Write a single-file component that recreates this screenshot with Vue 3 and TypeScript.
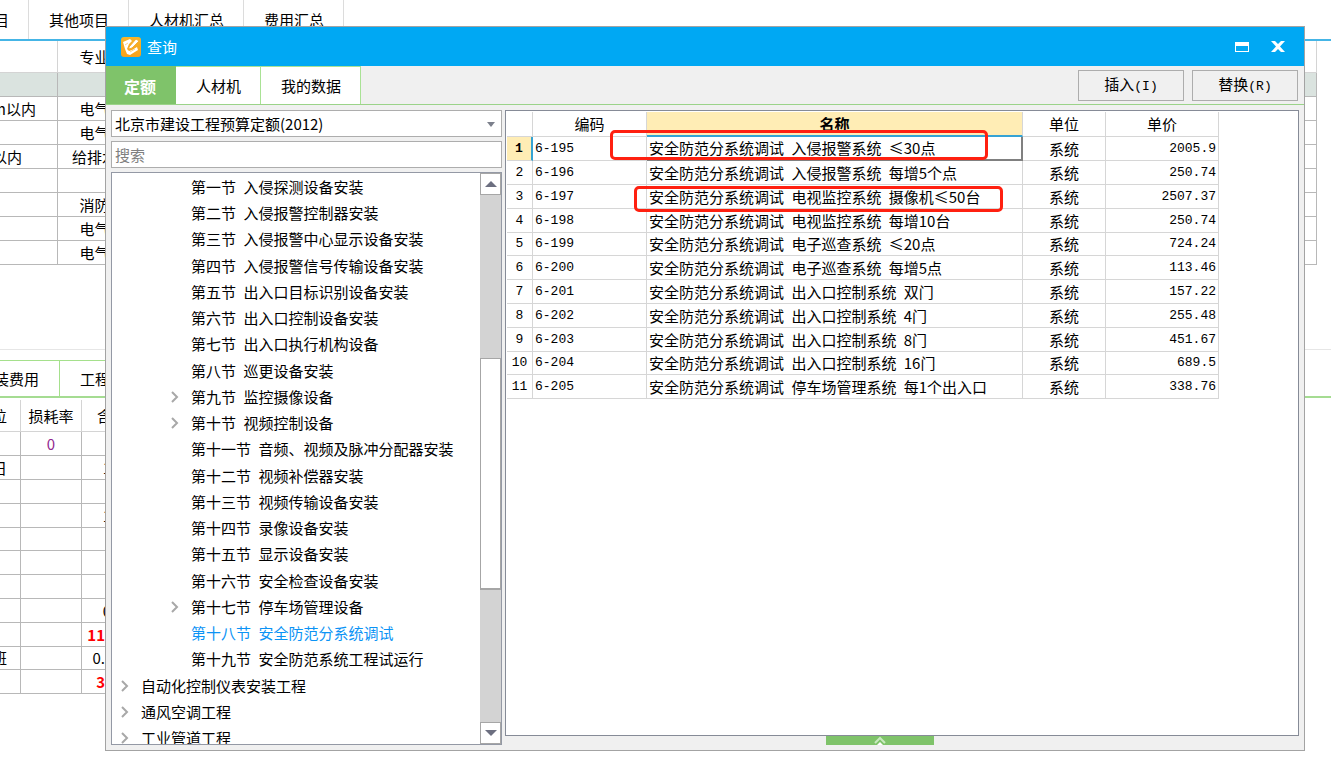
<script setup lang="ts">
import { ref } from 'vue'

interface TreeNode {
  level: 'root' | 'section'
  words: string[]
  expandable?: boolean
}

interface QuotaRow {
  code: string
  name: string[]
  unit: string
  price: string
}

const sheetTabs: string[] = ['目', '其他项目', '人材机汇总', '费用汇总']
const activeTab = ref('定额')
const dialogTabs: string[] = ['定额', '人材机', '我的数据']
const library = ref('北京市建设工程预算定额(2012)')
const keyword = ref('')
const selectedNode = ref('第十八节')

const upperRows: string[][] = [
  ['', ''],
  ['m以内', '电气'],
  ['', '电气'],
  ['以内', '给排水'],
  ['', ''],
  ['', '消防'],
  ['', '电气'],
  ['', '电气'],
]

const lowerRows: { unit: string; loss: string; amount: string; kind: string }[] = [
  { unit: '', loss: '0', amount: '', kind: '' },
  { unit: '日', loss: '', amount: '1', kind: 'far' },
  { unit: '', loss: '', amount: '', kind: '' },
  { unit: '', loss: '', amount: '1', kind: 'far' },
  { unit: '', loss: '', amount: '', kind: '' },
  { unit: '', loss: '', amount: '', kind: '' },
  { unit: '', loss: '', amount: '', kind: '' },
  { unit: '', loss: '', amount: '0', kind: 'far' },
  { unit: '', loss: '', amount: '11', kind: 'alert' },
  { unit: '班', loss: '', amount: '0.', kind: '' },
  { unit: '', loss: '', amount: '3', kind: 'alert' },
]

const nodes: TreeNode[] = [
  { level: 'section', words: ['第一节', '入侵探测设备安装'] },
  { level: 'section', words: ['第二节', '入侵报警控制器安装'] },
  { level: 'section', words: ['第三节', '入侵报警中心显示设备安装'] },
  { level: 'section', words: ['第四节', '入侵报警信号传输设备安装'] },
  { level: 'section', words: ['第五节', '出入口目标识别设备安装'] },
  { level: 'section', words: ['第六节', '出入口控制设备安装'] },
  { level: 'section', words: ['第七节', '出入口执行机构设备'] },
  { level: 'section', words: ['第八节', '巡更设备安装'] },
  { level: 'section', words: ['第九节', '监控摄像设备'], expandable: true },
  { level: 'section', words: ['第十节', '视频控制设备'], expandable: true },
  { level: 'section', words: ['第十一节', '音频、视频及脉冲分配器安装'] },
  { level: 'section', words: ['第十二节', '视频补偿器安装'] },
  { level: 'section', words: ['第十三节', '视频传输设备安装'] },
  { level: 'section', words: ['第十四节', '录像设备安装'] },
  { level: 'section', words: ['第十五节', '显示设备安装'] },
  { level: 'section', words: ['第十六节', '安全检查设备安装'] },
  { level: 'section', words: ['第十七节', '停车场管理设备'], expandable: true },
  { level: 'section', words: ['第十八节', '安全防范分系统调试'] },
  { level: 'section', words: ['第十九节', '安全防范系统工程试运行'] },
  { level: 'root', words: ['自动化控制仪表安装工程'], expandable: true },
  { level: 'root', words: ['通风空调工程'], expandable: true },
  { level: 'root', words: ['工业管道工程'], expandable: true },
]

const group = '安全防范分系统调试'
const rows: QuotaRow[] = [
  { code: '6-195', name: [group, '入侵报警系统', '≤30点'], unit: '系统', price: '2005.9' },
  { code: '6-196', name: [group, '入侵报警系统', '每增5个点'], unit: '系统', price: '250.74' },
  { code: '6-197', name: [group, '电视监控系统', '摄像机≤50台'], unit: '系统', price: '2507.37' },
  { code: '6-198', name: [group, '电视监控系统', '每增10台'], unit: '系统', price: '250.74' },
  { code: '6-199', name: [group, '电子巡查系统', '≤20点'], unit: '系统', price: '724.24' },
  { code: '6-200', name: [group, '电子巡查系统', '每增5点'], unit: '系统', price: '113.46' },
  { code: '6-201', name: [group, '出入口控制系统', '双门'], unit: '系统', price: '157.22' },
  { code: '6-202', name: [group, '出入口控制系统', '4门'], unit: '系统', price: '255.48' },
  { code: '6-203', name: [group, '出入口控制系统', '8门'], unit: '系统', price: '451.67' },
  { code: '6-204', name: [group, '出入口控制系统', '16门'], unit: '系统', price: '689.5' },
  { code: '6-205', name: [group, '停车场管理系统', '每1个出入口'], unit: '系统', price: '338.76' },
]
</script>

<template>
  <div class="page">
    <div class="workspace">
      <nav class="sheet-tabs">
        <button v-for="tab in sheetTabs" :key="tab" type="button" class="sheet-tab">{{ tab }}</button>
      </nav>

      <table class="back-table upper">
        <colgroup><col class="u-desc" /><col class="u-major" /><col /></colgroup>
        <thead>
          <tr><th></th><th>专业</th><th></th></tr>
        </thead>
        <tbody>
          <tr v-for="(row, i) in upperRows" :key="i" :class="{ current: i === 0 }">
            <td>{{ row[0] }}</td>
            <td class="center">{{ row[1] }}</td>
            <td></td>
          </tr>
        </tbody>
      </table>

      <div class="pane-edge"></div>
      <nav class="detail-tabs">
        <button type="button" class="detail-tab">装费用</button>
        <button type="button" class="detail-tab">工程</button>
      </nav>

      <table class="back-table lower">
        <colgroup><col class="l-unit" /><col class="l-loss" /><col class="l-amount" /></colgroup>
        <thead>
          <tr><th class="unit">位</th><th>损耗率</th><th>含量</th></tr>
        </thead>
        <tbody>
          <tr v-for="(row, i) in lowerRows" :key="i">
            <td class="unit">{{ row.unit }}</td>
            <td class="loss">{{ row.loss }}</td>
            <td class="amount" :class="row.kind">{{ row.amount }}</td>
          </tr>
        </tbody>
      </table>
    </div>

    <section class="dialog" role="dialog" aria-labelledby="dialog-title">
      <header class="title-bar">
        <svg class="app-icon" viewBox="0 0 20 20" aria-hidden="true">
          <defs>
            <linearGradient id="amber" x1="0" y1="0" x2="0" y2="1">
              <stop offset="0" stop-color="#f6b52b" />
              <stop offset="1" stop-color="#f7a11a" />
            </linearGradient>
          </defs>
          <rect width="20" height="20" rx="3" fill="url(#amber)" />
          <path d="M2 5L9 2L11 4L8 7L6 12L8 14L11 13L16 10L17 13L9 18L6 17L4 12Z" fill="#fff" />
          <path d="M8 10L15 2L18 4L11 11L8 12Z" fill="#fff" stroke="#f5ad35" stroke-width="1" />
          <path d="M4 8L7 6M9 15L14 12" stroke="#f9d48c" stroke-width="1" />
        </svg>
        <h1 id="dialog-title">查询</h1>
        <button type="button" class="window-btn" aria-label="最大化">
          <svg width="14" height="10" viewBox="0 0 14 10"><path d="M0 0H14V10H0ZM1 4V9H13V4Z" fill="#fff" fill-rule="evenodd" /></svg>
        </button>
        <button type="button" class="window-btn" aria-label="关闭">
          <svg width="14" height="11" viewBox="0 0 14 11"><path d="M0 0H4L7 3L10 0H14L9 5.5L14 11H10L7 8L4 11H0L5 5.5Z" fill="#fff" /></svg>
        </button>
      </header>

      <div class="tool-bar">
        <button
          v-for="tab in dialogTabs"
          :key="tab"
          type="button"
          class="tab"
          :class="{ active: tab === activeTab }"
          @click="activeTab = tab"
        >{{ tab }}</button>
        <div class="actions">
          <button type="button" class="action">插入<span class="latin">(I)</span></button>
          <button type="button" class="action">替换<span class="latin">(R)</span></button>
        </div>
      </div>

      <div class="content">
        <aside class="side">
          <div class="combo">
            <select v-model="library" aria-label="定额库">
              <option>北京市建设工程预算定额(2012)</option>
            </select>
            <svg class="combo-arrow" width="8" height="5" viewBox="0 0 8 5"><path d="M0 0H8L4 5Z" fill="#7c808c" /></svg>
          </div>
          <input v-model="keyword" class="search" type="text" placeholder="搜索" aria-label="搜索" />
          <div class="tree">
            <ul>
              <li v-for="node in nodes" :key="node.words[0]" :class="[node.level, { selected: node.words[0] === selectedNode }]">
                <span class="twist">
                  <svg v-if="node.expandable" width="8" height="12" viewBox="0 0 8 12"><path d="M1 1L6 6L1 11" fill="none" stroke="#a8a8a8" stroke-width="2" /></svg>
                </span>
                <button type="button" @click="selectedNode = node.words[0]">
                  <template v-for="(word, i) in node.words" :key="i"><span class="word">{{ word }}</span>{{ ' ' }}</template>
                </button>
              </li>
            </ul>
            <div class="scrollbar">
              <button type="button" aria-label="向上"><svg width="12" height="6" viewBox="0 0 12 6"><path d="M0 6H12L6 0Z" fill="#6c6f80" /></svg></button>
              <div class="track-above"></div>
              <div class="thumb"></div>
              <div class="track-below"></div>
              <button type="button" aria-label="向下"><svg width="12" height="6" viewBox="0 0 12 6"><path d="M0 0H12L6 6Z" fill="#6c6f80" /></svg></button>
            </div>
          </div>
        </aside>

        <div class="main">
          <div class="grid">
            <table class="quota">
              <colgroup>
                <col class="c-no" /><col class="c-code" /><col class="c-name" /><col class="c-unit" /><col class="c-price" />
              </colgroup>
              <thead>
                <tr><th></th><th>编码</th><th class="focus">名称</th><th>单位</th><th>单价</th></tr>
              </thead>
              <tbody>
                <tr v-for="(row, i) in rows" :key="row.code" :class="{ current: i === 0 }">
                  <td class="no latin">{{ i + 1 }}</td>
                  <td class="latin">{{ row.code }}</td>
                  <td class="name">
                    <template v-for="(word, n) in row.name" :key="n"><span class="word">{{ word }}</span>{{ ' ' }}</template>
                  </td>
                  <td class="center">{{ row.unit }}</td>
                  <td class="price latin">{{ row.price }}</td>
                </tr>
              </tbody>
            </table>
            <div class="mark first"></div>
            <div class="mark second"></div>
          </div>
          <button type="button" class="expander" aria-label="展开">
            <svg width="12" height="9" viewBox="0 0 12 9"><path d="M1 7L6 2L11 7" fill="none" stroke="#c9eabf" stroke-width="2" /><path d="M3 9L6 6L9 9Z" fill="#fff" /></svg>
          </button>
        </div>
      </div>
    </section>
  </div>
</template>

<style>
body {
  margin: 0;
  background: #fff;
}
</style>

<style scoped>
.page {
  position: relative;
  min-height: 100vh;
  overflow: hidden;
  color: #000;
  font-family: "Noto Sans CJK SC", "Liberation Sans", sans-serif;
  font-size: 15px;
  line-height: 20px;
}

*,
*::before {
  box-sizing: border-box;
}

button,
input,
select {
  margin: 0;
  padding: 0;
  border: 0;
  background: none;
  color: inherit;
  font: inherit;
}

svg {
  display: block;
}

.latin {
  font-family: "Liberation Mono", monospace;
  font-size: 13px;
}

.word:not(:last-child) {
  margin-right: 4px;
}

/* Workspace behind the dialog */
.sheet-tabs {
  display: flex;
  height: 41px;
  border-bottom: 2px solid #45b5e6;
}

.sheet-tab {
  padding: 0 19px 0 20px;
  border-right: 1px solid #dcdcdc;
}

.sheet-tab:first-child {
  margin-left: -26px;
}

.back-table {
  margin-left: -8px;
  border-collapse: separate;
  border-spacing: 0;
  table-layout: fixed;
}

.back-table th,
.back-table td {
  height: 24px;
  padding: 0;
  border-right: 1px solid #b8b8b8;
  border-bottom: 1px solid #b8b8b8;
  font-weight: 400;
  white-space: nowrap;
  overflow: hidden;
}

.back-table th {
  border-color: #d4d4d4;
}

.upper {
  width: calc(100% - 6px);
}

.upper th {
  height: 32px;
}

.upper .current td {
  background: #dae3df;
}

.u-desc {
  width: 66px;
}

.u-major {
  width: 74px;
}

.center {
  text-align: center;
}

.pane-edge {
  margin-top: 84px;
  border-top: 1px solid #e6e6e6;
}

.detail-tabs {
  display: flex;
  height: 38px;
  margin-top: 10px;
  border-bottom: 2px solid #a5dc92;
}

.detail-tab {
  padding: 0 20px;
  border-top: 1px solid #a5e08c;
  border-right: 1px solid #a5e08c;
}

.detail-tab:first-child {
  margin-left: -26px;
}

.lower {
  width: 150px;
  margin-top: 2px;
}

.lower th {
  height: 32px;
}

.lower tr:nth-child(5n) td {
  height: 23px;
}

.l-unit {
  width: 29px;
}

.l-loss,
.l-amount {
  width: 61px;
}

.back-table .unit {
  padding-right: 13px;
  text-align: right;
}

.loss {
  color: #92278f;
  text-align: center;
}

.back-table .amount {
  padding-right: 37px;
  text-align: right;
}

.back-table .far {
  padding-right: 31px;
}

.back-table .alert {
  color: #f00;
  font-weight: 700;
}

/* Dialog */
.dialog {
  position: absolute;
  inset: 26px 26px 23px 105px;
  display: flex;
  flex-direction: column;
  border: 1px solid #a3a3a3;
  background: #f0f0f0;
}

.title-bar {
  display: flex;
  align-items: center;
  height: 39px;
  padding: 0 12px 0 15px;
  background: #00a8f3;
  color: #fff;
}

.app-icon {
  width: 20px;
  height: 20px;
}

.title-bar h1 {
  flex: 1;
  margin: 0 0 0 6px;
  font-size: 15px;
  font-weight: 400;
}

.window-btn {
  display: flex;
  align-items: center;
  justify-content: center;
  width: 28px;
  height: 28px;
}

.window-btn + .window-btn {
  margin-left: 8px;
}

.tool-bar {
  display: flex;
  height: 39px;
  border-bottom: 1px solid #9bd389;
}

.tab {
  padding: 0 19px 0 20px;
  border-top: 1px solid #a9e295;
  border-right: 1px solid #a9e295;
  background: #fff;
}

.tab.active {
  padding: 0 19px 0 18px;
  border-color: #7fc36a;
  background: #7fc36a;
  color: #fff;
  font-size: 16px;
  font-weight: 700;
}

.actions {
  display: flex;
  align-items: center;
  gap: 8px;
  margin-left: auto;
  padding-right: 6px;
}

.action {
  width: 106px;
  height: 31px;
  border: 1px solid #adadad;
}

.content {
  flex: 1;
  display: flex;
  gap: 3px;
  min-height: 0;
  padding: 5px;
}

.side {
  display: flex;
  flex-direction: column;
  gap: 4px;
  width: 391px;
}

.combo {
  position: relative;
  height: 27px;
  border: 1px solid #adadad;
  background: #fff;
}

.combo select {
  display: block;
  width: 100%;
  height: 100%;
  padding: 0 24px 0 3px;
  appearance: none;
}

.combo-arrow {
  position: absolute;
  top: 11px;
  right: 6px;
  pointer-events: none;
}

.search {
  height: 27px;
  padding: 0 3px;
  border: 1px solid #adadad;
  background: #fff;
}

.search::placeholder {
  color: #808080;
  opacity: 1;
}

.tree {
  flex: 1;
  display: flex;
  min-height: 0;
  border: 1px solid #9499a5;
  background: #fff;
}

.tree ul {
  flex: 1;
  margin: 0;
  padding: 1px 0 0;
  overflow: hidden;
  list-style: none;
}

.tree li {
  display: flex;
  align-items: center;
  height: 26px;
  padding-left: 9px;
}

.tree li:nth-child(4n) {
  height: 27px;
}

.tree .section {
  padding-left: 59px;
}

.twist {
  width: 20px;
}

.selected {
  color: #0b93f5;
}

.scrollbar {
  display: flex;
  flex-direction: column;
  width: 21px;
  background: #d3d3d3;
}

.scrollbar button {
  display: flex;
  align-items: center;
  justify-content: center;
  height: 22px;
  border: 1px solid #a6a6a6;
  background: #fff;
}

.track-above {
  flex: 164;
}

.thumb {
  flex: 231;
  border: 1px solid #a6a6a6;
  border-bottom-width: 2px;
  background: #fff;
}

.track-below {
  flex: 133;
}

.main {
  flex: 1;
  display: flex;
  flex-direction: column;
  align-items: center;
  min-width: 0;
}

.grid {
  position: relative;
  flex: 1;
  align-self: stretch;
  padding: 1px;
  border: 1px solid #868b97;
  background: #fff;
}

.quota {
  width: 712px;
  border-collapse: separate;
  border-spacing: 0;
  table-layout: fixed;
}

.c-no {
  width: 26px;
}

.c-code {
  width: 114px;
}

.c-name {
  width: 376px;
}

.c-unit {
  width: 83px;
}

.c-price {
  width: 113px;
}

.quota th,
.quota td {
  height: 24px;
  padding: 0 2px;
  border-right: 1px solid #d6d6d6;
  border-bottom: 1px solid #d6d6d6;
  white-space: nowrap;
}

.quota th {
  height: 25px;
  font-weight: 400;
}

.quota th.focus {
  border-bottom: 2px solid #35a3d4;
  background: #ffedb5;
  font-weight: 700;
}

.quota tr:nth-child(5n) td {
  height: 23px;
}

.quota .no {
  padding: 0;
  text-align: center;
}

.quota .price {
  text-align: right;
}

.quota .current .no {
  border-right: 2px solid #35a3d4;
  background: #ffedb5;
  font-weight: 700;
}

.quota .current .name {
  border-right: 2px solid #808080;
  border-bottom: 2px solid #808080;
}

.mark {
  position: absolute;
  border: 3px solid #ff2010;
  border-radius: 5px;
  pointer-events: none;
}

.mark.first {
  top: 19px;
  left: 104px;
  width: 378px;
  height: 30px;
}

.mark.second {
  top: 75px;
  left: 128px;
  width: 369px;
  height: 26px;
}

.expander {
  display: flex;
  justify-content: center;
  width: 108px;
  height: 9px;
  margin-right: 44px;
  background: #7fc36a;
}
</style>
